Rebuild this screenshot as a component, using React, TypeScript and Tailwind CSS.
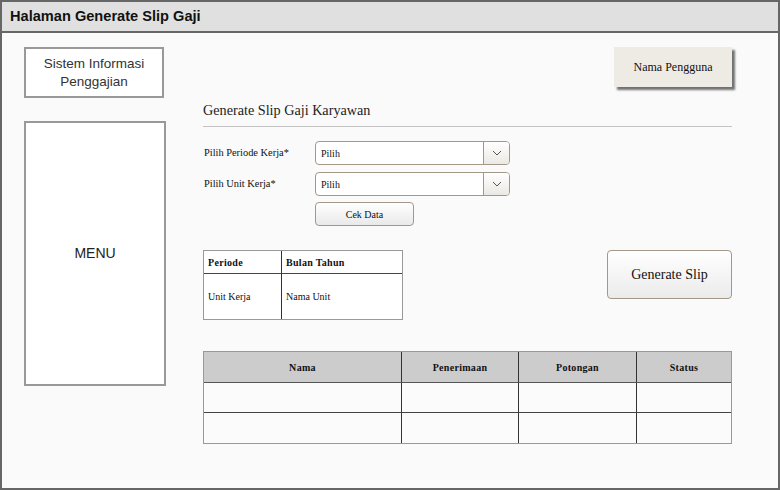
import React from "react";

const serif = "font-['Liberation_Serif','Times_New_Roman',serif]";
const sans = "font-['Liberation_Sans',Arial,sans-serif]";

function Chevron() {
  return (
    <svg width="10" height="6" viewBox="0 0 10 6" fill="none">
      <path d="M1 1l4 4 4-4" stroke="#555" strokeWidth="1" />
    </svg>
  );
}

function SelectBox() {
  return (
    <div className="flex h-[24px] w-[195px] overflow-hidden rounded-[4px] border border-[#a3978a] bg-white">
      <div className={`flex flex-1 items-center pl-[5px] text-[10px] text-[#111] ${serif}`}>Pilih</div>
      <div className="flex w-[26px] items-center justify-center border-l border-[#a3978a] bg-gradient-to-b from-white to-[#ebe9e4]">
        <Chevron />
      </div>
    </div>
  );
}

export default function App() {
  return (
    <div className="flex h-[490px] w-[780px] flex-col border-2 border-[#666] bg-[#fafafa]">
      {/* Title bar */}
      <div className="flex h-[31px] shrink-0 items-center border-b-2 border-[#666] bg-[#e0e0e0] pl-[8px]">
        <span className={`text-[14.6px] font-bold text-[#111] ${sans}`}>Halaman Generate Slip Gaji</span>
      </div>

      <div className="flex flex-1">
        {/* Sidebar */}
        <div className="flex w-[179px] shrink-0 flex-col pl-[22px] pt-[14px]">
          <div className={`flex h-[51px] w-[140px] items-center justify-center border-2 border-[#999] bg-white text-center text-[13.5px] leading-[18px] text-[#333] ${sans}`}>
            Sistem Informasi
            <br />
            Penggajian
          </div>
          <div className={`mt-[23px] flex h-[265px] w-[142px] items-center justify-center border-2 border-[#999] bg-white text-[14px] text-[#222] ${sans}`}>
            MENU
          </div>
        </div>

        {/* Main */}
        <div className={`flex w-[551px] flex-col pl-[22px] ${serif}`}>
          <div className="flex justify-end pt-[14px]">
            <div className="flex h-[40px] w-[118px] items-center justify-center bg-[#eeebe5] text-[12px] text-[#111] shadow-[3px_3px_2px_rgba(0,0,0,0.55)]">
              Nama Pengguna
            </div>
          </div>

          <div className="mt-[14px] text-[14.2px] leading-[18px] text-[#222]">Generate Slip Gaji Karyawan</div>
          <div className="mt-[7px] h-px w-[529px] bg-[#c4c4c4]" />

          <div className="mt-[14px] flex flex-col gap-[7px]">
            <div className="flex items-center">
              <span className="w-[112px] pl-[1px] text-[10.4px] text-[#111]">Pilih Periode Kerja*</span>
              <SelectBox />
            </div>
            <div className="flex items-center">
              <span className="w-[112px] pl-[1px] text-[10.4px] text-[#111]">Pilih Unit Kerja*</span>
              <SelectBox />
            </div>
          </div>
          <div className="ml-[112px] mt-[6px] flex h-[24px] w-[99px] items-center justify-center rounded-[4px] border border-[#a3978a] bg-gradient-to-b from-white to-[#e9e9e9] text-[10px] text-[#111]">
            Cek Data
          </div>

          <div className="mt-[24px] flex w-[529px] items-start justify-between">
            <div className="w-[200px] border border-[#999] bg-white text-[10px] text-[#111]">
              <div className="flex h-[23px] border-b border-[#444]">
                <div className="flex w-[78px] items-center border-r border-[#333] pl-[4px] font-bold tracking-[0.3px]">Periode</div>
                <div className="flex flex-1 items-center pl-[4px] font-bold tracking-[0.3px]">Bulan Tahun</div>
              </div>
              <div className="flex h-[45px]">
                <div className="flex w-[78px] items-center border-r border-[#333] pl-[4px]">Unit Kerja</div>
                <div className="flex flex-1 items-center pl-[4px]">Nama Unit</div>
              </div>
            </div>
            <div className="flex h-[49px] w-[125px] items-center justify-center rounded-[4px] border border-[#a3978a] bg-gradient-to-b from-white to-[#ebebeb] text-[14px] text-[#111]">
              Generate Slip
            </div>
          </div>

          <div className="mt-[31px] w-[529px] border border-[#999] text-[10px] text-[#111]">
            <div className="flex h-[31px] border-b border-[#555] bg-[#cccccc] font-bold tracking-[0.3px]">
              <div className="flex w-[198px] items-center justify-center border-r border-[#333]">Nama</div>
              <div className="flex w-[117px] items-center justify-center border-r border-[#333]">Penerimaan</div>
              <div className="flex w-[118px] items-center justify-center border-r border-[#333]">Potongan</div>
              <div className="flex flex-1 items-center justify-center">Status</div>
            </div>
            {[0, 1].map((i) => (
              <div key={i} className={`flex h-[30px] bg-[#fbfbfb] ${i === 0 ? "border-b border-[#444]" : ""}`}>
                <div className="w-[198px] border-r border-[#333]" />
                <div className="w-[117px] border-r border-[#333]" />
                <div className="w-[118px] border-r border-[#333]" />
                <div className="flex-1" />
              </div>
            ))}
          </div>
        </div>
      </div>
    </div>
  );
}
